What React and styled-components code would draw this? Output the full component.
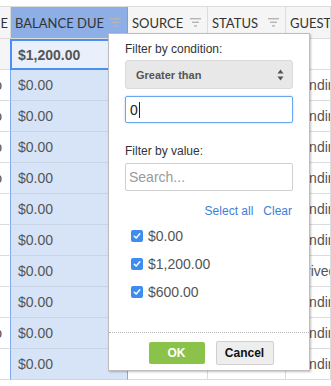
import styled, { createGlobalStyle } from "styled-components";

const GlobalStyle = createGlobalStyle`
  html, body { margin: 0; padding: 0; background: #fff; }
  body { font-family: "Liberation Sans", Arial, sans-serif; overflow: hidden; }
`;

const rows = [
  { lead: "", amount: "$1,200.00", guest: "", selected: true },
  { lead: "No", amount: "$0.00", guest: "Pending" },
  { lead: "No", amount: "$0.00", guest: "Pending" },
  { lead: "No", amount: "$0.00", guest: "Pending" },
  { lead: "No", amount: "$0.00", guest: "Pending" },
  { lead: "", amount: "$0.00", guest: "Pending" },
  { lead: "", amount: "$0.00", guest: "Pending" },
  { lead: "", amount: "$0.00", guest: "Arrived" },
  { lead: "", amount: "$0.00", guest: "Pending" },
  { lead: "No", amount: "$0.00", guest: "Pending" },
  { lead: "", amount: "$0.00", guest: "Pending" },
];

const values = ["$0.00", "$1,200.00", "$600.00"];

function FilterIcon() {
  return (
    <svg width="11" height="9" viewBox="0 0 11 9">
      <rect x="0" y="0" width="11" height="1.4" fill="#b5b5b5" />
      <rect x="2" y="3.6" width="7" height="1.4" fill="#b5b5b5" />
      <rect x="4" y="7.2" width="3" height="1.4" fill="#b5b5b5" />
    </svg>
  );
}

function Check() {
  return (
    <CheckBox>
      <svg width="8" height="8" viewBox="0 0 8 8">
        <path d="M1.3 4.2 L3.2 6 L6.8 1.8" stroke="#fff" strokeWidth="1.5" fill="none" strokeLinecap="round" strokeLinejoin="round" />
      </svg>
    </CheckBox>
  );
}

export default function App() {
  return (
    <>
      <GlobalStyle />
      <Page>
        <Grid>
          <HeadCell $lead>E</HeadCell>
          <HeadCell $active>BALANCE DUE<FilterIcon /></HeadCell>
          <HeadCell>SOURCE<FilterIcon /></HeadCell>
          <HeadCell>STATUS<FilterIcon /></HeadCell>
          <HeadCell>GUEST</HeadCell>
          {rows.map((r, i) => (
            <Row key={i}>
              <LeadCell $first={i === 0}><span>{r.lead}</span></LeadCell>
              <AmountCell $selected={r.selected}>{r.amount}</AmountCell>
              <Cell />
              <Cell />
              <Cell>{r.guest}</Cell>
            </Row>
          ))}
        </Grid>

        <Popup>
          <Label>Filter by condition:</Label>
          <Select>
            Greater than
            <svg width="7" height="12" viewBox="0 0 7 12">
              <path d="M3.5 0.5 L6.5 4.5 L0.5 4.5 Z" fill="#555" />
              <path d="M3.5 11.5 L6.5 7.5 L0.5 7.5 Z" fill="#555" />
            </svg>
          </Select>
          <ValueInput>
            0<Caret />
          </ValueInput>

          <Label $gap>Filter by value:</Label>
          <Search>Search...</Search>

          <Links>
            <Link>Select all</Link>
            <Link>Clear</Link>
          </Links>

          <ValueList>
            {values.map((v) => (
              <ValueRow key={v}>
                <Check />
                {v}
              </ValueRow>
            ))}
          </ValueList>

          <Footer>
            <OkButton>OK</OkButton>
            <CancelButton>Cancel</CancelButton>
          </Footer>
        </Popup>
      </Page>
    </>
  );
}

const Page = styled.div`
  position: relative;
  width: 331px;
  height: 386px;
  padding-top: 6px;
  box-sizing: border-box;
  overflow: hidden;
`;

const Grid = styled.div`
  display: grid;
  grid-template-columns: 11px 117px 80px 78px 1fr;
  grid-auto-rows: 31px;
  grid-template-rows: 32px;
  border-top: 1px solid #dcdcdc;
`;

const HeadCell = styled.div`
  display: flex;
  align-items: center;
  justify-content: ${(p) => (p.$lead ? "flex-end" : "space-between")};
  padding: ${(p) => (p.$lead ? "0 2px 0 0" : "0 6px 0 4px")};
  box-sizing: border-box;
  overflow: hidden;
  white-space: nowrap;
  font-family: Lato, "Liberation Sans", sans-serif;
  font-size: 13px;
  color: #333;
  background: ${(p) => (p.$active ? "#8eaee6" : "#f5f5f5")};
  border-right: 1px solid ${(p) => (p.$active ? "#7a9fe0" : "#dcdcdc")};
  border-bottom: 1px solid #dcdcdc;
`;

const Row = styled.div`
  display: contents;
`;

const Cell = styled.div`
  display: flex;
  align-items: center;
  padding: 0 6px;
  box-sizing: border-box;
  overflow: hidden;
  white-space: nowrap;
  font-size: 14px;
  color: #555;
  border-right: 1px solid #dcdcdc;
  border-bottom: 1px solid #dcdcdc;
`;

const LeadCell = styled(Cell)`
  justify-content: flex-end;
  padding: 0 8px 0 0;
  background: ${(p) => (p.$first ? "#f5f5f5" : "#fff")};
`;

const AmountCell = styled(Cell)`
  background: ${(p) => (p.$selected ? "#e9f0fb" : "#d7e3f6")};
  font-weight: ${(p) => (p.$selected ? "bold" : "normal")};
  border-left: ${(p) => (p.$selected ? "2px solid #4d8ff0" : "1px solid #7fa8ef")};
  border-right: ${(p) => (p.$selected ? "2px solid #4d8ff0" : "1px solid #7fa8ef")};
  border-top: ${(p) => (p.$selected ? "2px solid #4d8ff0" : "0")};
  border-bottom: ${(p) => (p.$selected ? "2px solid #4d8ff0" : "1px solid #c9d4e6")};
  margin-left: -1px;
  padding-left: ${(p) => (p.$selected ? "6px" : "7px")};
`;

const Popup = styled.div`
  position: absolute;
  left: 108px;
  top: 33px;
  width: 202px;
  height: 338px;
  box-sizing: border-box;
  background: #fff;
  border: 1px solid #bdbdbd;
  box-shadow: 1px 1px 2px rgba(0, 0, 0, 0.25);
  padding: 8px 16px 0 16px;
  display: flex;
  flex-direction: column;
`;

const Label = styled.div`
  font-size: 12px;
  line-height: 14px;
  color: #333;
  margin-top: ${(p) => (p.$gap ? "21px" : "0")};
`;

const Select = styled.div`
  margin-top: 4px;
  height: 29px;
  box-sizing: border-box;
  background: #e8e8e8;
  border: 1px solid #dadada;
  border-radius: 3px;
  display: flex;
  align-items: center;
  justify-content: space-between;
  padding: 0 8px 0 10px;
  font-size: 11px;
  font-weight: bold;
  color: #555;
`;

const ValueInput = styled.div`
  margin-top: 7px;
  height: 27px;
  box-sizing: border-box;
  border: 1px solid #6aa6ee;
  border-radius: 2px;
  box-shadow: 0 0 2px rgba(80, 150, 240, 0.5);
  display: flex;
  align-items: center;
  padding-left: 4px;
  font-size: 14px;
  color: #222;
`;

const Caret = styled.span`
  display: inline-block;
  width: 1px;
  height: 16px;
  margin-left: 1px;
  background: #222;
`;

const Search = styled.div`
  margin-top: 5px;
  height: 28px;
  box-sizing: border-box;
  border: 1px solid #cfcfcf;
  border-radius: 2px;
  display: flex;
  align-items: center;
  padding-left: 3px;
  font-size: 14px;
  color: #9a9a9a;
`;

const Links = styled.div`
  margin-top: 13px;
  display: flex;
  justify-content: flex-end;
  gap: 10px;
  padding-right: 1px;
  line-height: 14px;
`;

const Link = styled.span`
  font-size: 12px;
  color: #3b7fd9;
`;

const ValueList = styled.div`
  margin-top: 4px;
  display: flex;
  flex-direction: column;
`;

const ValueRow = styled.div`
  height: 28px;
  display: flex;
  align-items: center;
  gap: 5px;
  padding-left: 6px;
  font-size: 14px;
  color: #555;
`;

const CheckBox = styled.span`
  width: 12px;
  height: 12px;
  border-radius: 2px;
  background: #3d8cf2;
  display: flex;
  align-items: center;
  justify-content: center;
`;

const Footer = styled.div`
  margin: 26px -16px 0;
  border-top: 1px dotted #b8b8b8;
  padding-top: 8px;
  display: flex;
  justify-content: center;
  align-items: center;
  gap: 11px;
  padding-left: 4px;
`;

const OkButton = styled.button`
  width: 56px;
  height: 22px;
  border: none;
  border-radius: 2px;
  background: #8bc34a;
  color: #fff;
  font-family: "Liberation Sans", Arial, sans-serif;
  font-size: 12px;
  font-weight: bold;
  padding: 0;
`;

const CancelButton = styled.button`
  width: 58px;
  height: 24px;
  border: 1px solid #cfcfcf;
  border-radius: 2px;
  background: #eeeeee;
  color: #111;
  font-family: "Liberation Sans", Arial, sans-serif;
  font-size: 12px;
  font-weight: bold;
  padding: 0;
`;
